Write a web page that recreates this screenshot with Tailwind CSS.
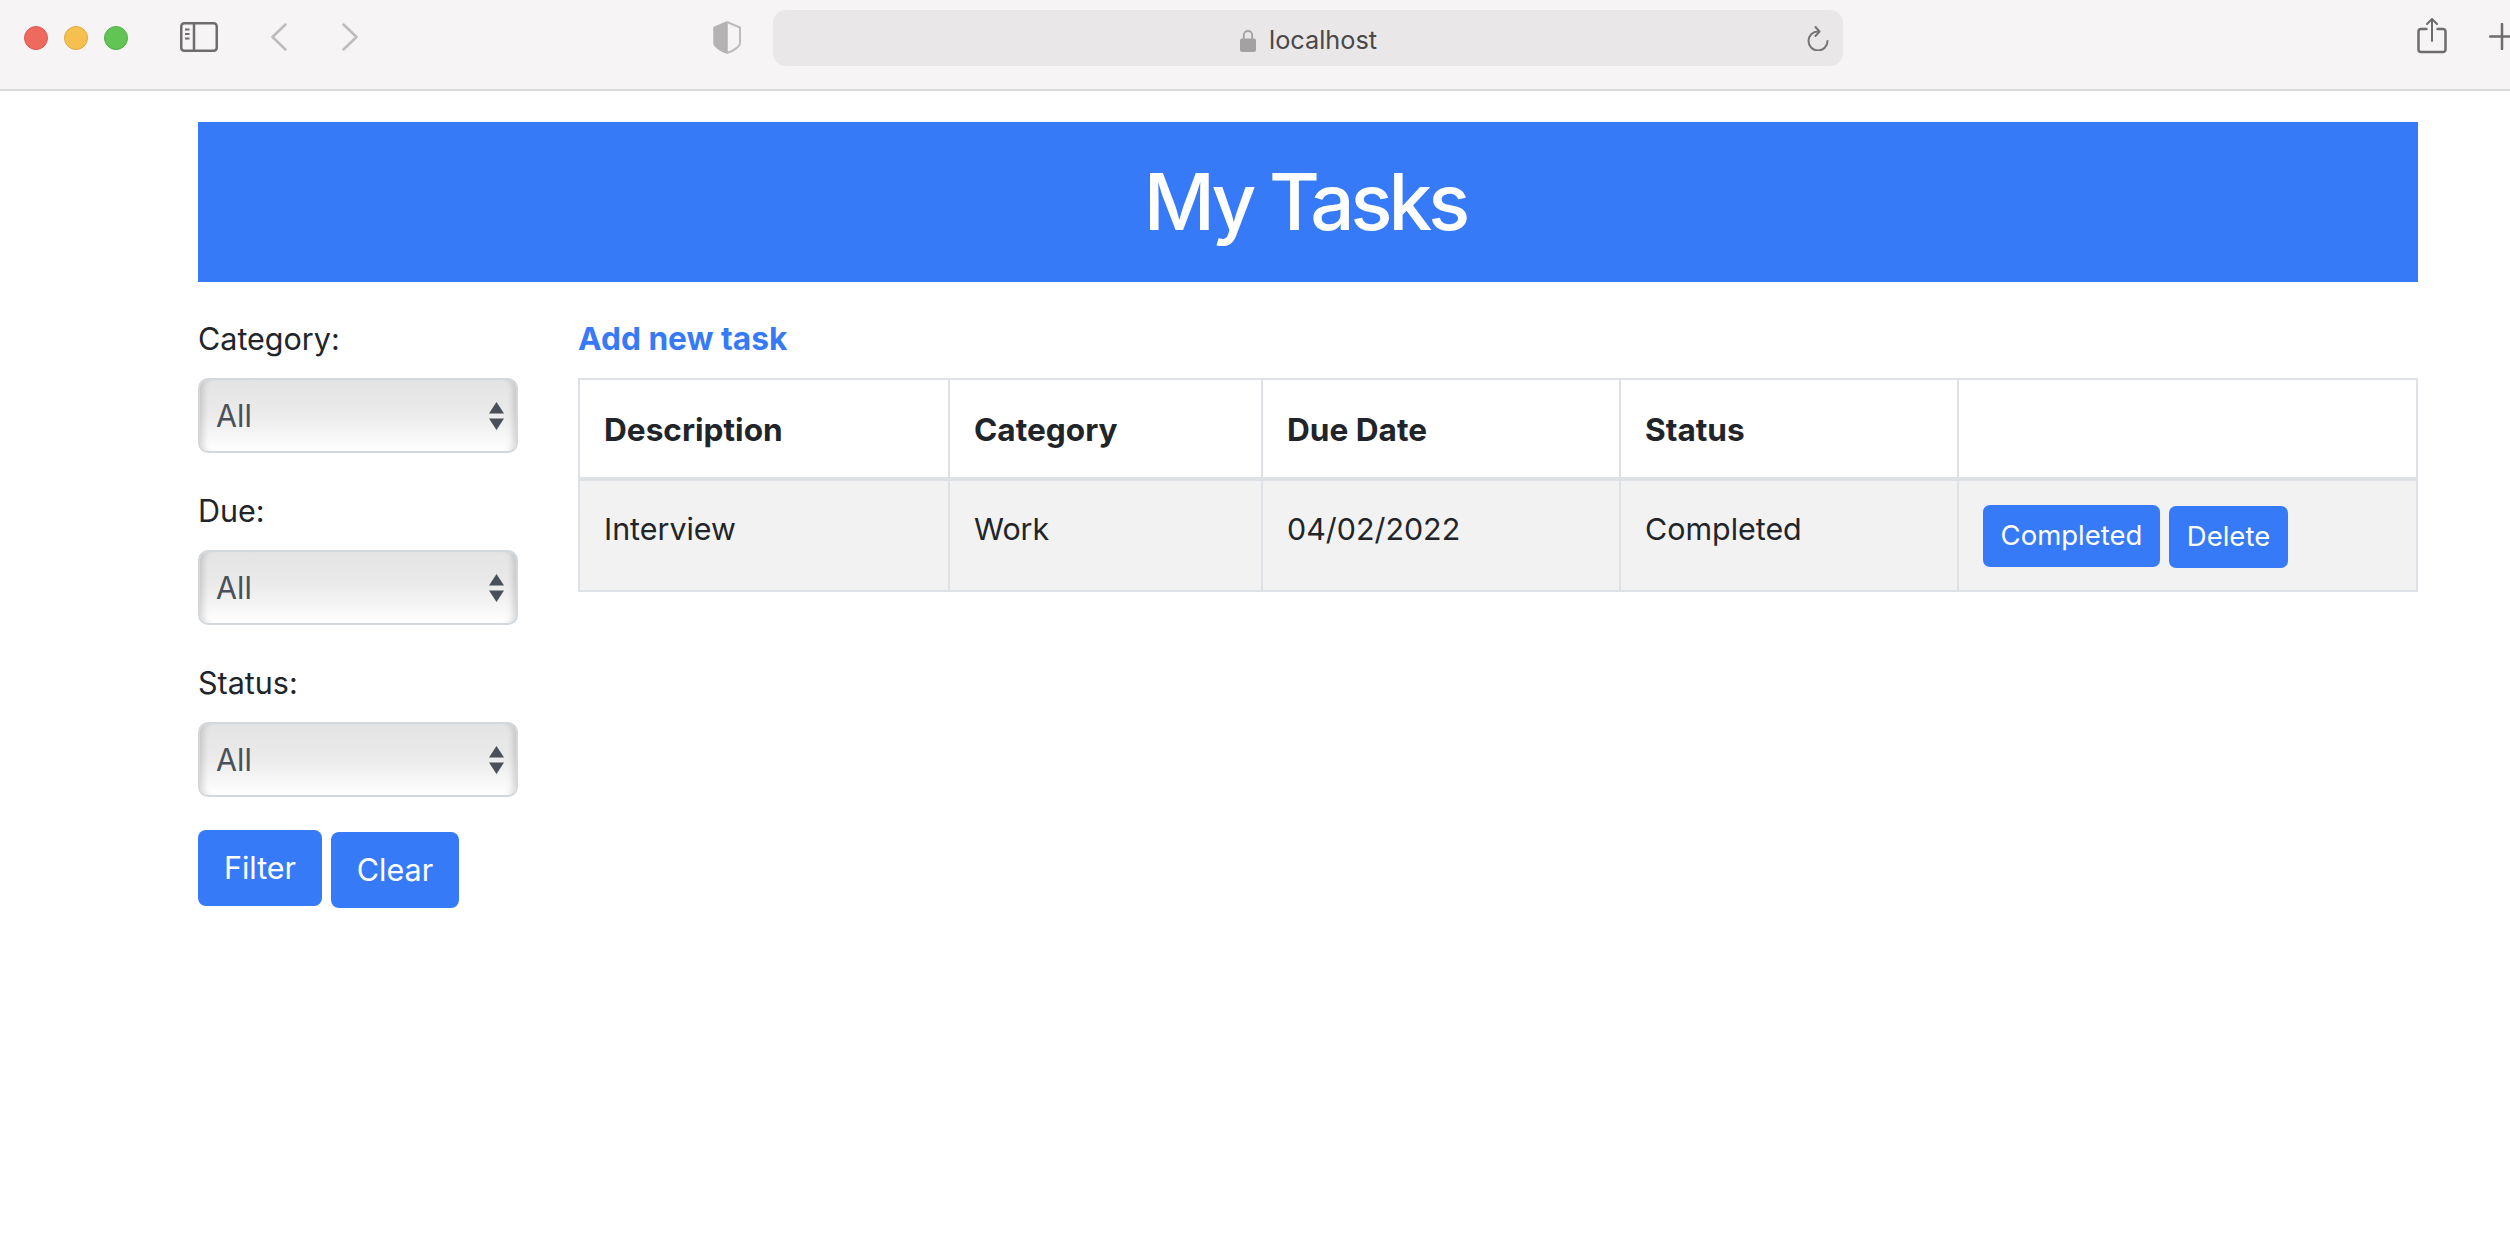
<!DOCTYPE html>
<html lang="en">
<head>
  <meta charset="UTF-8">
  <meta name="viewport" content="width=device-width, initial-scale=1.0">
  <title>My Tasks</title>
  <script src="https://cdn.jsdelivr.net/npm/@tailwindcss/browser@4"></script>
</head>
<body class="bg-white text-[#212529] font-['Inter',sans-serif] h-[1246px] w-[2510px] overflow-hidden">
  <!-- Browser toolbar -->
  <div class="h-[91px] bg-[#f6f4f5] border-b-2 border-[#dcdcdc] flex items-start relative overflow-hidden">
    <div class="flex gap-4 mt-[26px] ml-[24px]">
      <span class="w-6 h-6 rounded-full bg-[#ee6a5f] border border-[#dc5a50]"></span>
      <span class="w-6 h-6 rounded-full bg-[#f6c04f] border border-[#dfa83e]"></span>
      <span class="w-6 h-6 rounded-full bg-[#61c454] border border-[#50ae44]"></span>
    </div>
    <svg class="ml-[52px] mt-[22px]" width="38" height="30" viewBox="0 0 38 30" fill="none" stroke="#6e6c6d">
      <rect x="1.25" y="1.25" width="35.5" height="27.5" rx="3" stroke-width="2.5"/>
      <path d="M14 1v28" stroke-width="2.5"/>
      <path d="M5 7.5h4.5M5 12h4.5M5 16.500h4.500" stroke-width="2"/>
    </svg>
    <svg class="ml-[53px] mt-[23px]" width="16" height="28" viewBox="0 0 16 28" fill="none" stroke="#bdbbbc" stroke-width="2.5" stroke-linecap="round" stroke-linejoin="round">
      <path d="M14.500 1.500 1.500 14l13 12.500"/>
    </svg>
    <svg class="ml-[55px] mt-[23px]" width="16" height="28" viewBox="0 0 16 28" fill="none" stroke="#bdbbbc" stroke-width="2.5" stroke-linecap="round" stroke-linejoin="round">
      <path d="M1.500 1.500 14.500 14l-13 12.500"/>
    </svg>
    <svg class="ml-[355px] mt-[21px]" width="28" height="33" viewBox="0 0 28 33" fill="none">
      <path d="M14 1 1 6.500V22c0 3 6 8 13 10V1Z" fill="#b4b2b3" stroke="#b4b2b3" stroke-width="1.500" stroke-linejoin="round"/>
      <path d="M14 1l13 5.500V22c0 3-6 8-13 10" stroke="#bdbbbc" stroke-width="2" stroke-linejoin="round"/>
    </svg>
    <div class="ml-[32px] mt-[10px] w-[1070px] h-[56px] rounded-[13px] bg-[#e9e7e8] flex items-center relative">
      <div class="absolute left-[467px] top-[18px] flex items-center gap-[13px]">
        <svg width="16" height="23" viewBox="0 0 16 23">
          <path d="M3.800 11V6.200a4.200 4.200 0 0 1 8.400 0V11" fill="none" stroke="#a3a1a2" stroke-width="1.800"/>
          <rect x="0" y="9.500" width="16" height="13.500" rx="2" fill="#a3a1a2"/>
        </svg>
        <span class="text-[25.300px] leading-[24px] text-[#4a4849]">localhost</span>
      </div>
      <svg class="absolute left-[1034px] top-[16px]" width="22" height="25" viewBox="0 0 22 25" fill="none" stroke="#767475" stroke-width="2" stroke-linecap="round" stroke-linejoin="round">
        <path d="M11 5.500a9.500 9.500 0 1 0 9.500 9.500"/>
        <path d="M8.500 1 12.500 5.500 8.500 10"/>
      </svg>
    </div>
    <svg class="absolute left-[2417px] top-[17px]" width="30" height="37" viewBox="0 0 30 37" fill="none" stroke="#6e6c6d" stroke-linecap="round" stroke-linejoin="round">
      <path d="M9.500 12H4a2.500 2.500 0 0 0-2.500 2.500v18A2.500 2.500 0 0 0 4 35h22a2.500 2.500 0 0 0 2.500-2.500v-18A2.500 2.500 0 0 0 26 12h-5.500" stroke-width="2.500"/>
      <path d="M15 24V2M10 7l5-5 5 5" stroke-width="2"/>
    </svg>
    <svg class="absolute left-[2489px] top-[23px]" width="26" height="27" viewBox="0 0 26 27" fill="none" stroke="#6e6c6d" stroke-width="2.500" stroke-linecap="round">
      <path d="M13 1v25M1 13.500h24"/>
    </svg>
  </div>

  <main class="ml-[198px] w-[2220px] pt-[31px]">
    <h1 class="h-[160px] pr-[6px] bg-[#377af8] text-white text-[78px] font-medium tracking-[-4px] leading-[160px] text-center">My Tasks</h1>

    <div class="flex gap-[60px] mt-[39px]">
      <!-- Filters -->
      <form class="w-[320px] shrink-0">
        <label class="block text-[30.500px] leading-[36px] h-[57px]">Category:</label>
        <div class="relative h-[75px] mb-[40px] rounded-[10px] border-2 border-[#d3d8dd] bg-[linear-gradient(#e4e4e4_0%,#e9e9e9_40%,#f1f1f1_65%,#ffffff_100%)] shadow-[inset_8px_0_6px_-5px_rgba(0,0,0,0.15),inset_-8px_0_6px_-5px_rgba(0,0,0,0.15)]">
          <select class="appearance-none w-full h-full bg-transparent pl-[16px] text-[30.500px] text-[#495057] outline-none"><option>All</option></select>
          <svg class="absolute right-[12px] top-[22px] pointer-events-none" width="15" height="28" viewBox="0 0 15 28" fill="#495057"><path d="M7.500 0 15 11.500H0zM0 16.500h15L7.500 28z"/></svg>
        </div>
        <label class="block text-[30.500px] leading-[36px] h-[57px]">Due:</label>
        <div class="relative h-[75px] mb-[40px] rounded-[10px] border-2 border-[#d3d8dd] bg-[linear-gradient(#e4e4e4_0%,#e9e9e9_40%,#f1f1f1_65%,#ffffff_100%)] shadow-[inset_8px_0_6px_-5px_rgba(0,0,0,0.15),inset_-8px_0_6px_-5px_rgba(0,0,0,0.15)]">
          <select class="appearance-none w-full h-full bg-transparent pl-[16px] text-[30.500px] text-[#495057] outline-none"><option>All</option></select>
          <svg class="absolute right-[12px] top-[22px] pointer-events-none" width="15" height="28" viewBox="0 0 15 28" fill="#495057"><path d="M7.500 0 15 11.500H0zM0 16.500h15L7.500 28z"/></svg>
        </div>
        <label class="block text-[30.500px] leading-[36px] h-[57px]">Status:</label>
        <div class="relative h-[75px] mb-[33px] rounded-[10px] border-2 border-[#d3d8dd] bg-[linear-gradient(#e4e4e4_0%,#e9e9e9_40%,#f1f1f1_65%,#ffffff_100%)] shadow-[inset_8px_0_6px_-5px_rgba(0,0,0,0.15),inset_-8px_0_6px_-5px_rgba(0,0,0,0.15)]">
          <select class="appearance-none w-full h-full bg-transparent pl-[16px] text-[30.500px] text-[#495057] outline-none"><option>All</option></select>
          <svg class="absolute right-[12px] top-[22px] pointer-events-none" width="15" height="28" viewBox="0 0 15 28" fill="#495057"><path d="M7.500 0 15 11.500H0zM0 16.500h15L7.500 28z"/></svg>
        </div>
        <div class="flex items-start gap-[9px]">
          <button type="button" class="w-[124px] h-[76px] rounded-[8px] bg-[#377af8] text-white text-[30.500px]">Filter</button>
          <button type="button" class="w-[128px] h-[76px] mt-[2px] rounded-[8px] bg-[#377af8] text-white text-[30.500px]">Clear</button>
        </div>
      </form>

      <!-- Task list -->
      <section class="flex-1">
        <a href="#" class="block h-[57px] text-[31.700px] leading-[36px] font-bold text-[#377af8]">Add new task</a>
        <table class="w-full table-fixed border-collapse text-[30.400px] border-2 border-[#dee2e6]">
          <colgroup>
            <col class="w-[370px]"><col class="w-[313px]"><col class="w-[358px]"><col class="w-[338px]"><col>
          </colgroup>
          <thead>
            <tr class="h-[100px] border-b-4 border-[#dee2e6] text-[31.600px]">
              <th class="border-2 border-[#dee2e6] px-[24px] pt-[2px] text-left font-bold">Description</th>
              <th class="border-2 border-[#dee2e6] px-[24px] pt-[2px] text-left font-bold">Category</th>
              <th class="border-2 border-[#dee2e6] px-[24px] pt-[2px] text-left font-bold">Due Date</th>
              <th class="border-2 border-[#dee2e6] px-[24px] pt-[2px] text-left font-bold">Status</th>
              <th class="border-2 border-[#dee2e6]"></th>
            </tr>
          </thead>
          <tbody>
            <tr class="h-[112px] bg-[#f2f2f2]">
              <td class="border-2 border-[#dee2e6] px-[24px] pt-[30px] align-top leading-[36px]">Interview</td>
              <td class="border-2 border-[#dee2e6] px-[24px] pt-[30px] align-top leading-[36px]">Work</td>
              <td class="border-2 border-[#dee2e6] px-[24px] pt-[30px] align-top leading-[36px]">04/02/2022</td>
              <td class="border-2 border-[#dee2e6] px-[24px] pt-[30px] align-top leading-[36px]">Completed</td>
              <td class="border-2 border-[#dee2e6] px-[24px] pt-[24px] align-top">
                <div class="flex items-start gap-[9px]">
                  <button type="button" class="w-[177px] h-[62px] rounded-[7px] bg-[#377af8] text-white text-[27.500px]">Completed</button>
                  <button type="button" class="w-[119px] h-[62px] mt-px rounded-[7px] bg-[#377af8] text-white text-[27.500px]">Delete</button>
                </div>
              </td>
            </tr>
          </tbody>
        </table>
      </section>
    </div>
  </main>
</body>
</html>
